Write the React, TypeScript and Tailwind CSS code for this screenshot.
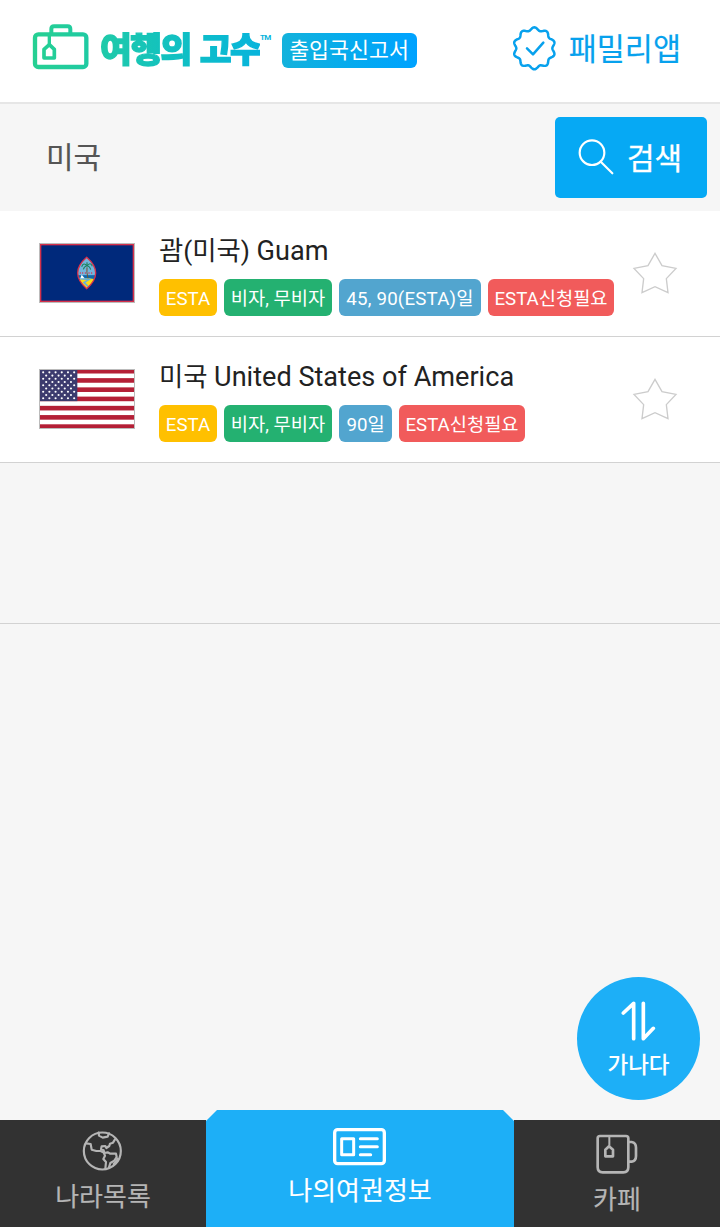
import React from "react";

const KR = "font-['Roboto','Noto_Sans_CJK_KR',sans-serif]";

function scallop(cx: number, cy: number, base: number, amp: number, lobes: number) {
  const points: string[] = [];
  for (let i = 0; i < 200; i++) {
    const a = (i / 200) * Math.PI * 2;
    const r = base + amp * Math.cos(lobes * a);
    points.push(`${(cx + r * Math.sin(a)).toFixed(2)} ${(cy - r * Math.cos(a)).toFixed(2)}`);
  }
  return `M${points.join("L")}Z`;
}

function SuitcaseIcon() {
  return (
    <svg className="h-[48px] w-[58px] shrink-0" viewBox="36 38 174 144" fill="none" strokeLinejoin="round" strokeLinecap="round">
      <defs>
        <linearGradient id="case" x1="36" y1="0" x2="210" y2="0" gradientUnits="userSpaceOnUse">
          <stop offset="0" stopColor="#26d092" />
          <stop offset="1" stopColor="#1fcaa3" />
        </linearGradient>
      </defs>
      <g stroke="url(#case)">
        <rect x="45" y="72" width="154" height="98" rx="10" strokeWidth="13" />
        <path d="M94 70V56Q94 48 102 48H143Q151 48 151 56V70" strokeWidth="12" />
        <path d="M88 72V102" strokeWidth="10" />
        <path d="M88 103L72 117V143H103V117Z" strokeWidth="11" />
      </g>
    </svg>
  );
}

function SealIcon() {
  return (
    <svg className="h-[48px] w-[46px] shrink-0" viewBox="33 42 138 144" fill="none" stroke="#07a1ed" strokeWidth="7.5" strokeLinecap="round" strokeLinejoin="round">
      <path d={scallop(103, 115, 58.5, 4.5, 10)} />
      <path d="M81 115L99 133L130 98" />
    </svg>
  );
}

function SearchIcon() {
  return (
    <svg className="-mt-[2px] h-[36px] w-[36px] shrink-0" viewBox="114 99 108 108" fill="none" stroke="#fff" strokeWidth="6.5" strokeLinecap="round">
      <circle cx="156" cy="140" r="37" />
      <path d="M183 168L217 202" />
    </svg>
  );
}

function StarIcon() {
  return (
    <svg className="h-[44px] w-[46px] shrink-0" viewBox="906 63 138 132" fill="none" stroke="#ccc" strokeWidth="4" strokeLinejoin="miter">
      <path d="M975 70L996 107L1038 115L1009 146L1014 188L975 170L936 188L941 146L912 115L954 107Z" />
    </svg>
  );
}

function GlobeIcon() {
  return (
    <svg className="h-[42px] w-[42px]" viewBox="246 91 126 126" fill="none" stroke="#b5b5b5" strokeWidth="6.5" strokeLinejoin="round" strokeLinecap="round">
      <circle cx="307" cy="154" r="55.5" />
      <path d="M296 99L297 108L308 114L323 111L327 101" />
      <path d="M258 131L272 133L275 150L289 154L302 154L311 159L315 168L310 178L318 187L316 207" />
      <path d="M345 119L339 129L330 132L328 139L319 145L316 139L305 140L303 149L311 152L313 160L323 158L331 162L348 162L350 172L343 183L331 190L327 203" />
      <path d="M341 193L349 184L353 177" />
    </svg>
  );
}

function PassportIcon() {
  return (
    <svg className="h-[38px] w-[54px]" viewBox="279 83 162 114" fill="none" stroke="#fff" strokeLinecap="round" strokeLinejoin="round">
      <rect x="284" y="88" width="149" height="102" rx="9" strokeWidth="10" />
      <rect x="305" y="115" width="36" height="48" strokeWidth="9" />
      <path d="M361 115H412M361 139H412M361 163H392" strokeWidth="9" />
    </svg>
  );
}

function MugIcon() {
  return (
    <svg className="h-[41px] w-[43px]" viewBox="347 102 129 123" fill="none" stroke="#b5b5b5" strokeWidth="8" strokeLinejoin="round">
      <path d="M352 115Q352 108 359 108H437Q444 108 444 115V202Q444 217 429 217H367Q352 217 352 202Z" />
      <path d="M445 126H454Q467 128 467 143V168Q467 183 454 185H445" />
      <path d="M387 110V137" strokeWidth="6" />
      <path d="M386 139L375 149V169H398V149Z" />
    </svg>
  );
}

function SortIcon() {
  return (
    <svg className="h-[40px] w-[35px]" viewBox="183 124 105 120" fill="none" stroke="#fff" strokeWidth="11" strokeLinecap="round" strokeLinejoin="round">
      <path d="M190 160L221 131V237" />
      <path d="M250 131V237L280 206" />
    </svg>
  );
}

function GuamFlag() {
  return (
    <svg className="block h-full w-full" viewBox="0 0 282 174" preserveAspectRatio="none">
      <rect width="282" height="174" fill="#d6304a" />
      <rect x="4" y="4" width="274" height="166" fill="#00297b" />
      <clipPath id="seal">
        <path d="M140 40Q194 87 140 134Q86 87 140 40Z" />
      </clipPath>
      <g clipPath="url(#seal)">
        <rect x="110" y="38" width="60" height="57" fill="#72b5dd" />
        <rect x="110" y="94" width="60" height="12" fill="#0d6bb0" />
        <path d="M110 104L145 103L170 106V136H110Z" fill="#f9dc18" />
        <path d="M110 103L147 106L132 116L145 128" stroke="#65aedb" strokeWidth="5" fill="none" />
        <path d="M121 103L125 92L134 103Z" fill="#fff" />
        <path d="M141 70Q139 84 144 103" stroke="#76542f" strokeWidth="3" fill="none" />
        <path d="M141 66Q131 53 125 68M141 66Q151 52 157 67M141 66Q134 65 130 76M141 66Q149 66 152 77M141 66V55" stroke="#208360" strokeWidth="3.5" fill="none" />
        <path d="M121 84V90M128 84V90M136 84V90M147 84V90M155 84V90" stroke="#bd5376" strokeWidth="3" />
      </g>
      <path d="M140 40Q194 87 140 134Q86 87 140 40Z" fill="none" stroke="#d6304a" strokeWidth="4" />
    </svg>
  );
}

function UsaFlag() {
  const stars: React.ReactNode[] = [];
  for (let row = 0; row < 9; row++) {
    const count = row % 2 ? 5 : 6;
    for (let col = 0; col < count; col++) {
      stars.push(<circle key={`${row}-${col}`} cx={(row % 2 ? 18.5 : 9.5) + col * 18.6} cy={7 + row * 9.7} r="3.2" />);
    }
  }
  return (
    <svg className="block h-full w-full" viewBox="0 0 282 174" preserveAspectRatio="none">
      <rect width="282" height="174" fill="#fff" />
      {[0, 2, 4, 6, 8, 10, 12].map((i) => (
        <rect key={i} y={i * 13.85 - 3.3} width="282" height="13.85" fill="#b41f36" />
      ))}
      <rect width="112" height="93.4" fill="#3c3b6e" />
      <g fill="#fff">{stars}</g>
    </svg>
  );
}

type TagData = { text: string; box: string };

const countries: { korean: string; english: string; flag: React.ReactNode; tags: TagData[] }[] = [
  {
    korean: "괌(미국)",
    english: "Guam",
    flag: <GuamFlag />,
    tags: [
      { text: "ESTA", box: "w-[58px] bg-[#ffc000]" },
      { text: "비자, 무비자", box: "w-[108px] bg-[#24b171]" },
      { text: "45, 90(ESTA)일", box: "w-[142px] bg-[#52a5cf] tracking-[0.2px]" },
      { text: "ESTA신청필요", box: "w-[126px] bg-[#f15b5b]" },
    ],
  },
  {
    korean: "미국",
    english: "United States of America",
    flag: <UsaFlag />,
    tags: [
      { text: "ESTA", box: "w-[58px] bg-[#ffc000]" },
      { text: "비자, 무비자", box: "w-[108px] bg-[#24b171]" },
      { text: "90일", box: "w-[53px] bg-[#52a5cf]" },
      { text: "ESTA신청필요", box: "w-[126px] bg-[#f15b5b]" },
    ],
  },
];

export default function App() {
  return (
    <div className={`relative flex h-[1227px] w-[720px] flex-col overflow-hidden bg-[#f6f6f6] whitespace-nowrap ${KR}`}>
      <header className="flex h-[104px] shrink-0 items-start border-b-2 border-[#e6e6e6] bg-white pl-[32px]">
        <div className="mt-[23px] flex">
          <SuitcaseIcon />
        </div>
        <div className="mt-[25px] ml-[10px] flex h-[50px] w-[160px] items-center">
          <span className="bg-linear-to-r from-[#1fcaa8] to-[#08b4dc] bg-clip-text text-[34.5px] leading-[50px] font-black tracking-[-1.5px] text-transparent [word-spacing:2px] [-webkit-text-stroke:1.4px_transparent]">
            여행의 고수
          </span>
        </div>
        <span className="mt-[33px] w-[12px] text-[8px] leading-[9px] font-bold tracking-[-0.6px] text-[#08b4dc]">TM</span>
        <div className="mt-[33px] ml-[9.5px] flex h-[35px] w-[135px] items-center justify-center rounded-[6px] bg-linear-to-r from-[#13b2dc] to-[#00a2ff] pt-[1px] text-[21.7px] leading-[32px] text-white">
          출입국신고서
        </div>
        <div className="mt-[24px] ml-auto flex h-[48px] items-center gap-[12px] pr-[39px] text-[30.5px] text-[#07a1ed]">
          <SealIcon />
          <span className="pt-[4px] [-webkit-text-stroke:0.2px_currentColor]">패밀리앱</span>
        </div>
      </header>

      <section className="flex h-[107px] shrink-0 items-center justify-between pr-[13px] pl-[46px]">
        <span className="text-[30px] text-[#555] [-webkit-text-stroke:0.15px_currentColor]">미국</span>
        <button className="flex h-[81px] w-[152px] items-center gap-[13px] rounded-[5px] bg-[#06a9f4] pl-[23px] text-[30px] text-white">
          <SearchIcon />
          <span className="pt-[1px] [-webkit-text-stroke:0.3px_currentColor]">검색</span>
        </button>
      </section>

      <main className="flex flex-col">
        {countries.map((country) => (
          <article key={country.english} className="flex h-[126px] items-center border-b border-[#d2d2d2] bg-white pr-[42px] pb-[2px] pl-[39px]">
            <div className="h-[60px] w-[96px] shrink-0 border border-[#bbb]">{country.flag}</div>
            <div className="ml-[24px] flex flex-1 flex-col">
              <h2 className="flex h-[40px] items-baseline gap-[6.5px] pt-[1px] leading-[40px] text-[#222]">
                <span className="text-[26.4px]">{country.korean}</span>
                <span className="text-[27.1px]">{country.english}</span>
              </h2>
              <div className="mt-[9px] flex gap-[7px]">
                {country.tags.map((tag) => (
                  <span key={tag.text} className={`flex h-[37px] items-center justify-center rounded-[6px] pt-[4px] text-[18.7px] text-white ${tag.box}`}>
                    {tag.text}
                  </span>
                ))}
              </div>
            </div>
            <StarIcon />
          </article>
        ))}
        <div className="h-[161px] border-b border-[#d2d2d2]" />
      </main>

      <button className="absolute top-[977px] left-[577px] flex h-[123px] w-[123px] flex-col items-center rounded-full bg-[#1daff7] pt-[24px] text-[22.5px] leading-[32px] font-medium text-white">
        <SortIcon />
        <span className="mt-[8px]">가나다</span>
      </button>

      <nav className="mt-auto flex h-[117px] shrink-0 items-end text-[26px] leading-[36px]">
        <div className="flex h-[107px] w-[206px] flex-col items-center bg-[#323232] pt-[10px] text-[#b5b5b5]">
          <GlobeIcon />
          <span className="mt-[7px] [-webkit-text-stroke:0.15px_currentColor]">나라목록</span>
        </div>
        <div className="flex h-[117px] w-[308px] flex-col items-center bg-[#1daff7] pt-[18px] text-white [clip-path:polygon(11px_0,297px_0,308px_11px,308px_100%,0_100%,0_11px)]">
          <PassportIcon />
          <span className="mt-[7px] [-webkit-text-stroke:0.1px_currentColor]">나의여권정보</span>
        </div>
        <div className="flex h-[107px] w-[206px] flex-col items-center bg-[#323232] pt-[14px] text-[#b5b5b5]">
          <MugIcon />
          <span className="mt-[7px] [-webkit-text-stroke:0.15px_currentColor]">카페</span>
        </div>
      </nav>
    </div>
  );
}
